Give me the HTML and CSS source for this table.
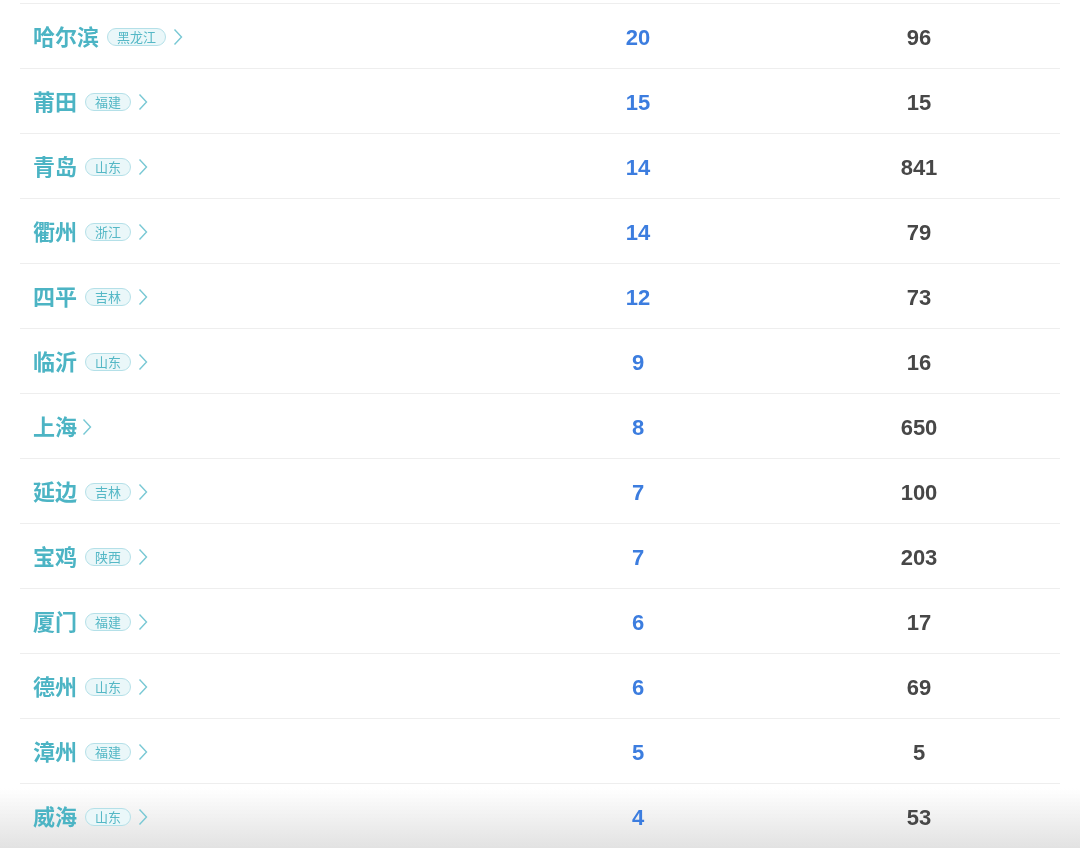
FILE: index.html
```html
<!DOCTYPE html>
<html lang="zh">
<head>
<meta charset="utf-8">
<link rel="stylesheet" href="styles.css">
</head>
<body>
<div class="table">
  <div class="row"><div class="city"><span class="name">哈尔滨</span><span class="tag">黑龙江</span><svg class="chev" viewBox="0 0 10 18"><polyline points="1.5,1.5 8.5,9 1.5,16.5"/></svg></div><div class="num blue">20</div><div class="num gray">96</div></div>
  <div class="row"><div class="city"><span class="name">莆田</span><span class="tag">福建</span><svg class="chev" viewBox="0 0 10 18"><polyline points="1.5,1.5 8.5,9 1.5,16.5"/></svg></div><div class="num blue">15</div><div class="num gray">15</div></div>
  <div class="row"><div class="city"><span class="name">青岛</span><span class="tag">山东</span><svg class="chev" viewBox="0 0 10 18"><polyline points="1.5,1.5 8.5,9 1.5,16.5"/></svg></div><div class="num blue">14</div><div class="num gray">841</div></div>
  <div class="row"><div class="city"><span class="name">衢州</span><span class="tag">浙江</span><svg class="chev" viewBox="0 0 10 18"><polyline points="1.5,1.5 8.5,9 1.5,16.5"/></svg></div><div class="num blue">14</div><div class="num gray">79</div></div>
  <div class="row"><div class="city"><span class="name">四平</span><span class="tag">吉林</span><svg class="chev" viewBox="0 0 10 18"><polyline points="1.5,1.5 8.5,9 1.5,16.5"/></svg></div><div class="num blue">12</div><div class="num gray">73</div></div>
  <div class="row"><div class="city"><span class="name">临沂</span><span class="tag">山东</span><svg class="chev" viewBox="0 0 10 18"><polyline points="1.5,1.5 8.5,9 1.5,16.5"/></svg></div><div class="num blue">9</div><div class="num gray">16</div></div>
  <div class="row"><div class="city"><span class="name">上海</span><svg class="chev solo" viewBox="0 0 10 18"><polyline points="1.5,1.5 8.5,9 1.5,16.5"/></svg></div><div class="num blue">8</div><div class="num gray">650</div></div>
  <div class="row"><div class="city"><span class="name">延边</span><span class="tag">吉林</span><svg class="chev" viewBox="0 0 10 18"><polyline points="1.5,1.5 8.5,9 1.5,16.5"/></svg></div><div class="num blue">7</div><div class="num gray">100</div></div>
  <div class="row"><div class="city"><span class="name">宝鸡</span><span class="tag">陕西</span><svg class="chev" viewBox="0 0 10 18"><polyline points="1.5,1.5 8.5,9 1.5,16.5"/></svg></div><div class="num blue">7</div><div class="num gray">203</div></div>
  <div class="row"><div class="city"><span class="name">厦门</span><span class="tag">福建</span><svg class="chev" viewBox="0 0 10 18"><polyline points="1.5,1.5 8.5,9 1.5,16.5"/></svg></div><div class="num blue">6</div><div class="num gray">17</div></div>
  <div class="row"><div class="city"><span class="name">德州</span><span class="tag">山东</span><svg class="chev" viewBox="0 0 10 18"><polyline points="1.5,1.5 8.5,9 1.5,16.5"/></svg></div><div class="num blue">6</div><div class="num gray">69</div></div>
  <div class="row"><div class="city"><span class="name">漳州</span><span class="tag">福建</span><svg class="chev" viewBox="0 0 10 18"><polyline points="1.5,1.5 8.5,9 1.5,16.5"/></svg></div><div class="num blue">5</div><div class="num gray">5</div></div>
  <div class="row"><div class="city"><span class="name">威海</span><span class="tag">山东</span><svg class="chev" viewBox="0 0 10 18"><polyline points="1.5,1.5 8.5,9 1.5,16.5"/></svg></div><div class="num blue">4</div><div class="num gray">53</div></div>
</div>
<div class="fade"></div>
</body>
</html>
```
FILE: styles.css
```css
html {
  background: #ffffff;
}
html, body {
  margin: 0;
  padding: 0;
  overflow: hidden;
}
body {
  font-family: "Noto Sans CJK SC", "Noto Sans", sans-serif;
  padding: 3px 20px 0 20px;
  height: 848px;
  box-sizing: border-box;
}
.table {
  display: flex;
  flex-direction: column;
}
.row {
  display: grid;
  grid-template-columns: 478px 280px 282px;
  align-items: center;
  height: 65px;
  box-sizing: border-box;
  border-top: 1px solid #eeeeee;
}
.city {
  display: flex;
  align-items: center;
  padding-left: 13px;
}
.name {
  font-size: 22px;
  font-weight: 700;
  color: #4cb4c4;
  line-height: 22px;
  padding-bottom: 3px;
}
.tag {
  margin-left: 8px;
  margin-top: 2px;
  height: 18px;
  box-sizing: border-box;
  padding: 0 9px 1px 9px;
  border: 1px solid #b4e0e8;
  background: #eaf7f9;
  border-radius: 9px;
  font-size: 13px;
  line-height: 13px;
  color: #55b8c6;
  display: flex;
  align-items: center;
}
.chev {
  width: 10px;
  height: 18px;
  margin-left: 7px;
  margin-top: 2px;
  fill: none;
  stroke: #78c8d4;
  stroke-width: 1.4;
}
.chev.solo {
  margin-left: 5px;
}
.num {
  text-align: center;
  font-family: "Liberation Sans", "Noto Sans", sans-serif;
  font-size: 22px;
  font-weight: 700;
  line-height: 22px;
  padding-top: 3px;
}
.blue { color: #3c7ddf; }
.gray { color: #474747; }
.fade {
  position: fixed;
  z-index: -1;
  left: 0;
  right: 0;
  bottom: 0;
  height: 60px;
  background: linear-gradient(to bottom, rgba(226,226,226,0), rgba(226,226,226,1));
  pointer-events: none;
}
```
